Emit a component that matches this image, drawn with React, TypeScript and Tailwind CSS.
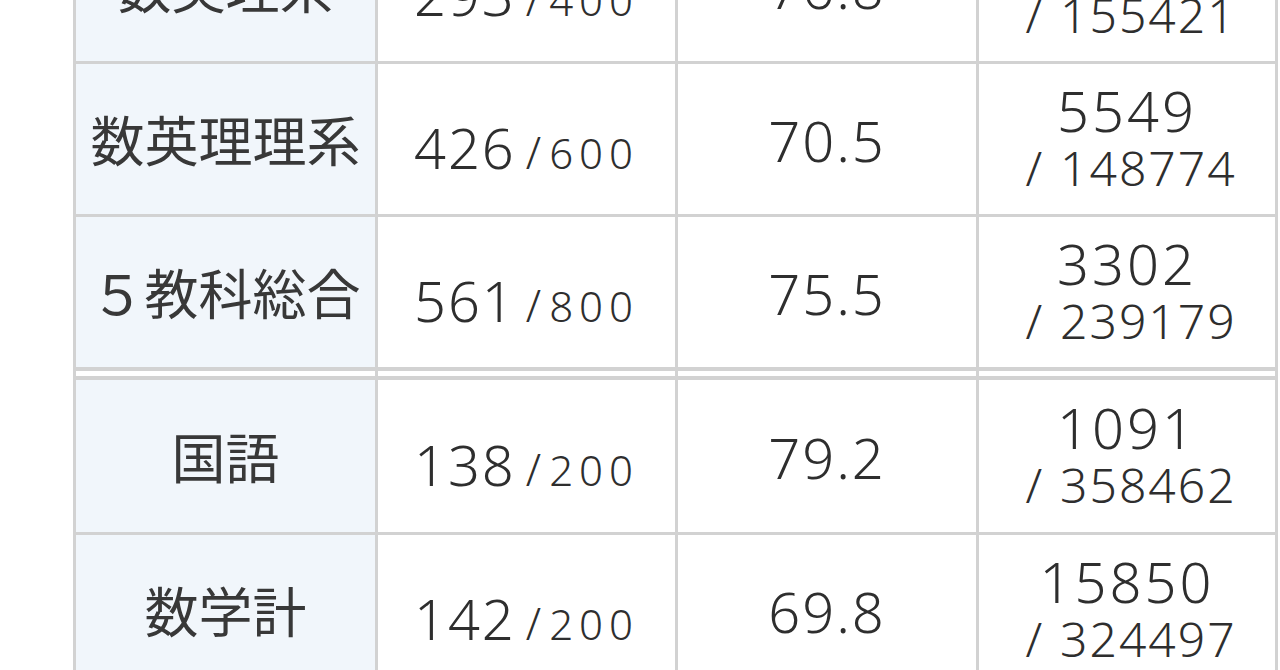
import React from "react";

type Row = {
  label: string;
  score: string;
  full: string;
  dev: string;
  rank: string;
  total: string;
};

const upper: Row[] = [
  { label: "数英理系", score: "293", full: "400", dev: "76.8", rank: "4032", total: "155421" },
  { label: "数英理理系", score: "426", full: "600", dev: "70.5", rank: "5549", total: "148774" },
  { label: "５教科総合", score: "561", full: "800", dev: "75.5", rank: "3302", total: "239179" },
];

const lower: Row[] = [
  { label: "国語", score: "138", full: "200", dev: "79.2", rank: "1091", total: "358462" },
  { label: "数学計", score: "142", full: "200", dev: "69.8", rank: "15850", total: "324497" },
];

const num = { fontFamily: '"Noto Sans", "Noto Sans CJK JP", sans-serif' };
const jp = { fontFamily: '"Noto Sans CJK JP", "Noto Sans", sans-serif' };

function ScoreRow({ row, height }: { row: Row; height: string }) {
  const cell = `${height} border-r-[3px] border-b-[3px] border-[#d2d2d2] flex items-center justify-center`;
  return (
    <div className="grid grid-cols-[302px_300px_301px_299px]">
      <div className={`${cell} bg-[#f1f6fb]`}>
        <span className="text-[54px] leading-none text-[#383838]" style={jp}>
          {row.label}
        </span>
      </div>
      <div className={`${cell} pt-[16px]`}>
        <span className="text-[#2e2e2e] whitespace-nowrap font-light" style={num}>
          <span className="text-[56px] leading-none tracking-[2px]">{row.score}</span>
          <span className="text-[44px] leading-none ml-[10px] mr-[8px]">/</span>
          <span className="text-[42px] leading-none tracking-[6px]">{row.full}</span>
        </span>
      </div>
      <div className={`${cell} pt-[2px]`}>
        <span className="text-[56px] leading-none tracking-[2px] text-[#2e2e2e] font-light" style={num}>
          {row.dev}
        </span>
      </div>
      <div className={`${cell} flex-col text-[#2e2e2e] font-light`} style={num}>
        <div className="text-[56px] leading-none tracking-[3px] -mt-[4px]">{row.rank}</div>
        <div className="text-[48px] leading-none tracking-[2px] mt-[6px] pl-[8px]">
          <span className="mr-[16px]">/</span>
          {row.total}
        </div>
      </div>
    </div>
  );
}

export default function App() {
  return (
    <div className="w-[1280px] h-[670px] overflow-hidden bg-white">
      <div className="ml-[73px] -mt-[89px] w-[1205px] border-l-[3px] border-[#d2d2d2]">
        {upper.map((r) => (
          <ScoreRow key={r.label} row={r} height="h-[153px]" />
        ))}
        <div className="grid grid-cols-[302px_300px_301px_299px] -mt-[3px] border-t-[4px] border-[#d2d2d2]">
          {[0, 1, 2, 3].map((i) => (
            <div key={i} className="h-[9px] border-r-[3px] border-b-[4px] border-[#d2d2d2] bg-white" />
          ))}
        </div>
        {lower.map((r, i) => (
          <ScoreRow key={r.label} row={r} height={i === 0 ? "h-[155px]" : "h-[153px]"} />
        ))}
      </div>
    </div>
  );
}
